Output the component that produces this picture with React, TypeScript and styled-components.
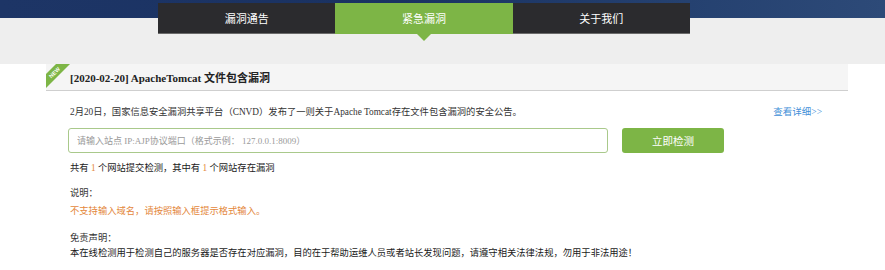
import React from 'react'
import styled, { createGlobalStyle } from 'styled-components'

const GlobalStyle = createGlobalStyle`
  body {
    margin: 0;
    background: #fff;
    font-family: "Liberation Serif", "Noto Sans CJK SC", serif;
    color: #333;
  }
`

const Header = styled.div`
  height: 64px;
  background-color: #eeeeee;
  background-image: linear-gradient(90deg, #1d3566 0%, #1a3262 45%, #24406f 75%, #2d4a78 100%);
  background-size: 100% 18px;
  background-repeat: no-repeat;
  padding-top: 3px;
  box-sizing: border-box;
`

const Nav = styled.div`
  display: flex;
  margin-left: 158px;
  width: 532px;
`

const Tab = styled.div<{ $active?: boolean }>`
  position: relative;
  flex: 1;
  height: 30px;
  display: flex;
  align-items: center;
  justify-content: center;
  font-size: 11px;
  font-family: "Noto Sans CJK SC", sans-serif;
  color: #fff;
  background: ${p => (p.$active ? '#7db546' : '#2b2b2e')};
  border-bottom: 1px solid ${p => (p.$active ? '#7db546' : '#6a6a6a')};
  &::after {
    content: '';
    display: ${p => (p.$active ? 'block' : 'none')};
    position: absolute;
    left: 50%;
    bottom: -8px;
    margin-left: -7px;
    border-left: 7px solid transparent;
    border-right: 7px solid transparent;
    border-top: 7px solid #7db546;
  }
`

const Card = styled.div`
  margin: 0 37px 0 46px;
`

const TitleBar = styled.div`
  position: relative;
  height: 26px;
  background: #f5f5f5;
  border-bottom: 1px solid #cfcfcf;
  display: flex;
  align-items: center;
  padding-left: 24px;
  font-size: 11px;
  font-weight: bold;
  color: #222;
`

const Badge = styled.svg`
  position: absolute;
  left: 0;
  top: 0;
`

const Body = styled.div`
  padding: 14px 26px 0 24px;
  font-size: 9.3px;
`

const InfoRow = styled.div`
  display: flex;
  justify-content: space-between;
  line-height: 14px;
`

const MoreLink = styled.a`
  color: #3f8fd8;
  text-decoration: none;
  font-size: 9.5px;
`

const FormRow = styled.div`
  display: flex;
  margin-top: 9px;
  margin-left: -2px;
`

const Input = styled.input`
  width: 540px;
  height: 25px;
  box-sizing: border-box;
  border: 1px solid #a9c98b;
  border-radius: 3px;
  padding: 0 8px;
  font-size: 9px;
  font-family: "Liberation Serif", "Noto Sans CJK SC", serif;
  outline: none;
  &::placeholder {
    color: #9a9a9a;
  }
`

const CheckButton = styled.button`
  margin-left: 14px;
  width: 102px;
  height: 25px;
  border: none;
  border-radius: 3px;
  background: #7db546;
  color: #fff;
  font-size: 10.5px;
  font-family: "Noto Sans CJK SC", sans-serif;
  cursor: pointer;
`

const Line = styled.div<{ $gap: number; $tone?: 'orange' | 'dark' }>`
  margin-top: ${p => p.$gap}px;
  line-height: 14px;
  color: ${p => (p.$tone === 'orange' ? '#e4883c' : p.$tone === 'dark' ? '#1a1a1a' : '#333')};
`

const Num = styled.span`
  color: #e4883c;
`

export default function App() {
  return (
    <>
      <GlobalStyle />
      <Header>
        <Nav>
          <Tab>漏洞通告</Tab>
          <Tab $active>紧急漏洞</Tab>
          <Tab>关于我们</Tab>
        </Nav>
      </Header>
      <Card>
        <TitleBar>
          <Badge width="26" height="26" viewBox="0 0 26 26">
            <polygon points="0,10 10,0 24,0 0,24" fill="#7db546" />
            <text
              x="8.5"
              y="10.5"
              fill="#fff"
              fontSize="5.5"
              textAnchor="middle"
              fontFamily="Liberation Sans, sans-serif"
              transform="rotate(-45 8.5 8.5)"
            >
              NEW
            </text>
          </Badge>
          [2020-02-20] ApacheTomcat 文件包含漏洞
        </TitleBar>
        <Body>
          <InfoRow>
            <span>2月20日，国家信息安全漏洞共享平台（CNVD）发布了一则关于Apache Tomcat存在文件包含漏洞的安全公告。</span>
            <MoreLink href="#">查看详细&gt;&gt;</MoreLink>
          </InfoRow>
          <FormRow>
            <Input placeholder="请输入站点 IP:AJP协议端口（格式示例： 127.0.0.1:8009）" />
            <CheckButton>立即检测</CheckButton>
          </FormRow>
          <Line $gap={8} $tone="dark">
            共有 <Num>1</Num> 个网站提交检测，其中有 <Num>1</Num> 个网站存在漏洞
          </Line>
          <Line $gap={11}>说明：</Line>
          <Line $gap={4} $tone="orange">不支持输入域名，请按照输入框提示格式输入。</Line>
          <Line $gap={13}>免责声明：</Line>
          <Line $gap={1} $tone="dark">
            本在线检测用于检测自己的服务器是否存在对应漏洞，目的在于帮助运维人员或者站长发现问题，请遵守相关法律法规，勿用于非法用途！
          </Line>
        </Body>
      </Card>
    </>
  )
}
